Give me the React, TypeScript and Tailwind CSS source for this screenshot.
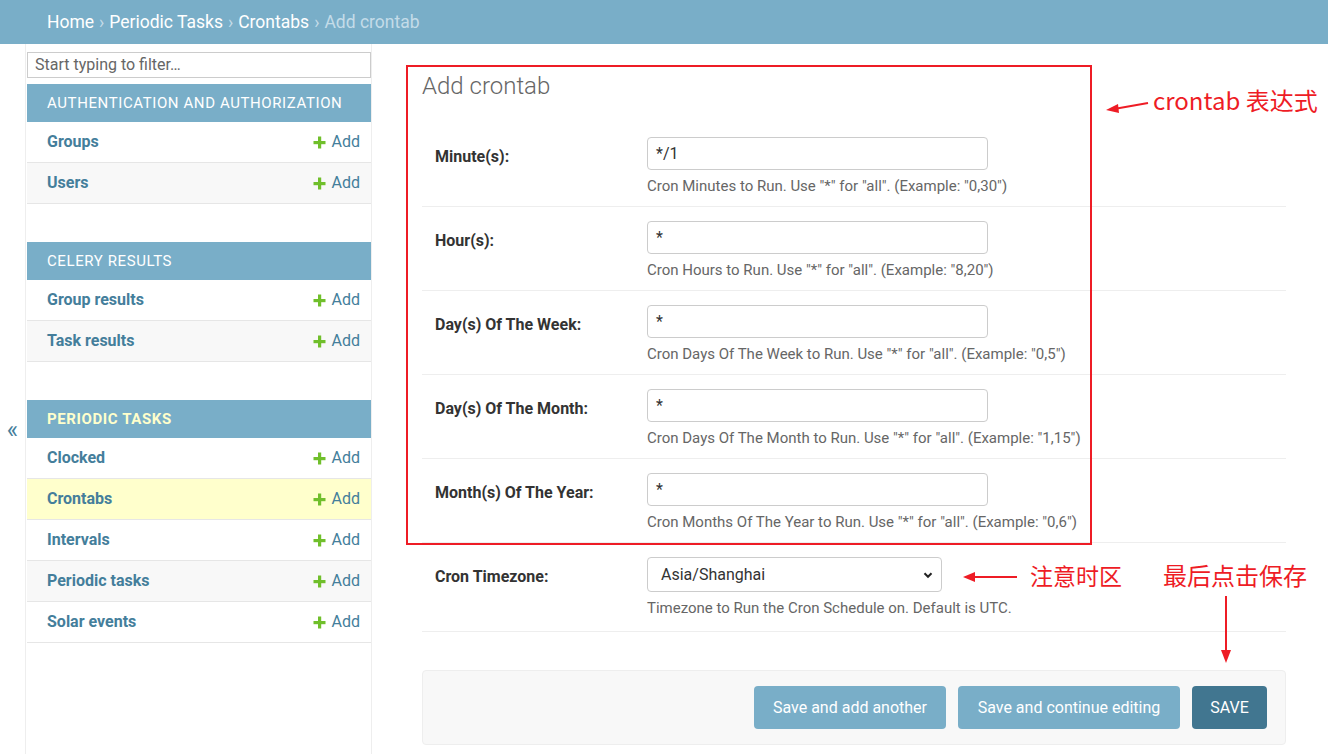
import React from "react";

type NavItem = { name: string; current?: boolean };
type NavSection = { title: string; current?: boolean; items: NavItem[] };

const sections: NavSection[] = [
  {
    title: "Authentication and Authorization",
    items: [{ name: "Groups" }, { name: "Users" }],
  },
  {
    title: "Celery Results",
    items: [{ name: "Group results" }, { name: "Task results" }],
  },
  {
    title: "Periodic Tasks",
    current: true,
    items: [
      { name: "Clocked" },
      { name: "Crontabs", current: true },
      { name: "Intervals" },
      { name: "Periodic tasks" },
      { name: "Solar events" },
    ],
  },
];

const fields = [
  { label: "Minute(s):", value: "*/1", help: 'Cron Minutes to Run. Use "*" for "all". (Example: "0,30")' },
  { label: "Hour(s):", value: "*", help: 'Cron Hours to Run. Use "*" for "all". (Example: "8,20")' },
  { label: "Day(s) Of The Week:", value: "*", help: 'Cron Days Of The Week to Run. Use "*" for "all". (Example: "0,5")' },
  { label: "Day(s) Of The Month:", value: "*", help: 'Cron Days Of The Month to Run. Use "*" for "all". (Example: "1,15")' },
  { label: "Month(s) Of The Year:", value: "*", help: 'Cron Months Of The Year to Run. Use "*" for "all". (Example: "0,6")' },
];

const PlusIcon = () => (
  <svg width="13" height="13" viewBox="0 0 13 13" className="shrink-0">
    <rect x="5" y="0.5" width="3.2" height="12" fill="#70bf2b" />
    <rect x="0.5" y="5" width="12" height="3.2" fill="#70bf2b" />
  </svg>
);

const Sidebar = () => (
  <nav className="w-[346px] shrink-0 border-r border-[#eee] pt-[8px]">
    <div className="pl-[1px] pb-[6px]">
      <div className="h-[26px] border border-[#ccc] bg-white px-[7px] text-[16px] leading-[24px] text-[#666]">
        Start typing to filter…
      </div>
    </div>
    {sections.map((s) => (
      <div key={s.title} className="mb-[38px] pl-[1px]">
        <div
          className={`h-[38px] bg-[#79aec8] px-[20px] text-[15px] uppercase leading-[38px] tracking-[0.6px] ${
            s.current ? "font-bold text-[#ffc]" : "text-white"
          }`}
        >
          {s.title}
        </div>
        {s.items.map((it, i) => (
          <div
            key={it.name}
            className={`flex h-[41px] items-center justify-between border-b border-[#e6e6e6] pl-[20px] pr-[11px] ${
              it.current ? "bg-[#ffc]" : i % 2 === 1 ? "bg-[#f8f8f8]" : "bg-white"
            }`}
          >
            <span className="text-[16px] font-bold text-[#447e9b]">{it.name}</span>
            <span className="flex items-center gap-[6px] text-[16px] text-[#447e9b]">
              <PlusIcon />
              Add
            </span>
          </div>
        ))}
      </div>
    ))}
  </nav>
);

const Row = ({
  label,
  help,
  last,
  children,
}: {
  label: string;
  help: string;
  last?: boolean;
  children: React.ReactNode;
}) => (
  <div className={`flex border-b border-[#eee] px-[13px] pt-[14px] ${last ? "pb-[14px]" : "pb-[11px]"}`}>
    <div className="w-[212px] shrink-0 pt-[10px] text-[16px] font-bold leading-[20px] text-[#333]">
      {label}
    </div>
    <div>
      {children}
      <div className="mt-[7px] text-[15px] leading-[18px] text-[#666]">{help}</div>
    </div>
  </div>
);

export default function App() {
  return (
    <div className="relative min-h-[754px] bg-white font-['Roboto',sans-serif]">
      <header className="flex h-[44px] items-center bg-[#79aec8] px-[47px] text-[17.5px] text-white">
        <span>Home</span>
        <span className="mx-[5px] text-[#c4dce8]">›</span>
        <span>Periodic Tasks</span>
        <span className="mx-[5px] text-[#c4dce8]">›</span>
        <span>Crontabs</span>
        <span className="mx-[5px] text-[#c4dce8]">›</span>
        <span className="text-[#c4dce8]">Add crontab</span>
      </header>

      <div className="flex min-h-[710px]">
        <div className="w-[26px] shrink-0 border-r border-[#eee] pt-[373px] text-center text-[24px] leading-[26px] text-[#447e9b]">
          «
        </div>
        <Sidebar />

        <main className="flex-1 pl-[50px] pr-[42px] pt-[28px]">
          <h1 className="mb-[22px] text-[24px] font-light leading-[29px] text-[#666]">Add crontab</h1>

          {fields.map((f) => (
            <Row key={f.label} label={f.label} help={f.help}>
              <div className="h-[33px] w-[341px] rounded-[4px] border border-[#ccc] bg-white px-[8px] text-[16px] leading-[31px] text-[#333]">
                {f.value}
              </div>
            </Row>
          ))}

          <Row last label="Cron Timezone:" help="Timezone to Run the Cron Schedule on. Default is UTC.">
            <div className="flex h-[35px] w-[295px] items-center justify-between rounded-[4px] border border-[#ccc] bg-white pl-[13px] pr-[8px] text-[16px] text-[#333]">
              <span>Asia/Shanghai</span>
              <svg width="10" height="10" viewBox="0 0 10 10">
                <path d="M1.5 3.2 L5 6.8 L8.5 3.2" fill="none" stroke="#222" strokeWidth="2" />
              </svg>
            </div>
          </Row>

          <div className="mt-[38px] flex justify-end gap-[12px] rounded-[4px] border border-[#eee] bg-[#f8f8f8] py-[15px] pr-[18px]">
            <button className="h-[43px] w-[192px] rounded-[4px] bg-[#79aec8] text-[16px] text-white">
              Save and add another
            </button>
            <button className="h-[43px] w-[222px] rounded-[4px] bg-[#79aec8] text-[16px] text-white">
              Save and continue editing
            </button>
            <button className="h-[43px] w-[75px] rounded-[4px] bg-[#417690] text-[16px] text-white">
              SAVE
            </button>
          </div>
        </main>
      </div>

      {/* annotations drawn over the screenshot */}
      <div className="pointer-events-none absolute left-[406px] top-[65px] h-[480px] w-[686px] border-2 border-[#ee1c25]" />
      <svg className="pointer-events-none absolute left-0 top-0" width="1328" height="754">
        <g stroke="#ee1c25" strokeWidth="2" fill="#ee1c25">
          <line x1="1148" y1="103" x2="1114" y2="109" />
          <polygon points="1106,110 1118,104 1119,113" stroke="none" />
          <line x1="1017" y1="577" x2="972" y2="577" />
          <polygon points="963,577 975,572 975,582" stroke="none" />
          <line x1="1226" y1="596" x2="1226" y2="652" />
          <polygon points="1226,663 1221,650 1231,650" stroke="none" />
        </g>
      </svg>
      <div className="pointer-events-none absolute left-[1153px] top-[85px] text-[24px] leading-[30px] text-[#ee1c25] font-['Noto_Sans_CJK_SC',sans-serif]">
        crontab 表达式
      </div>
      <div className="pointer-events-none absolute left-[1030px] top-[560px] text-[23px] leading-[30px] text-[#ee1c25] font-['Noto_Sans_CJK_SC',sans-serif]">
        注意时区
      </div>
      <div className="pointer-events-none absolute left-[1163px] top-[560px] text-[24px] leading-[30px] text-[#ee1c25] font-['Noto_Sans_CJK_SC',sans-serif]">
        最后点击保存
      </div>
    </div>
  );
}
